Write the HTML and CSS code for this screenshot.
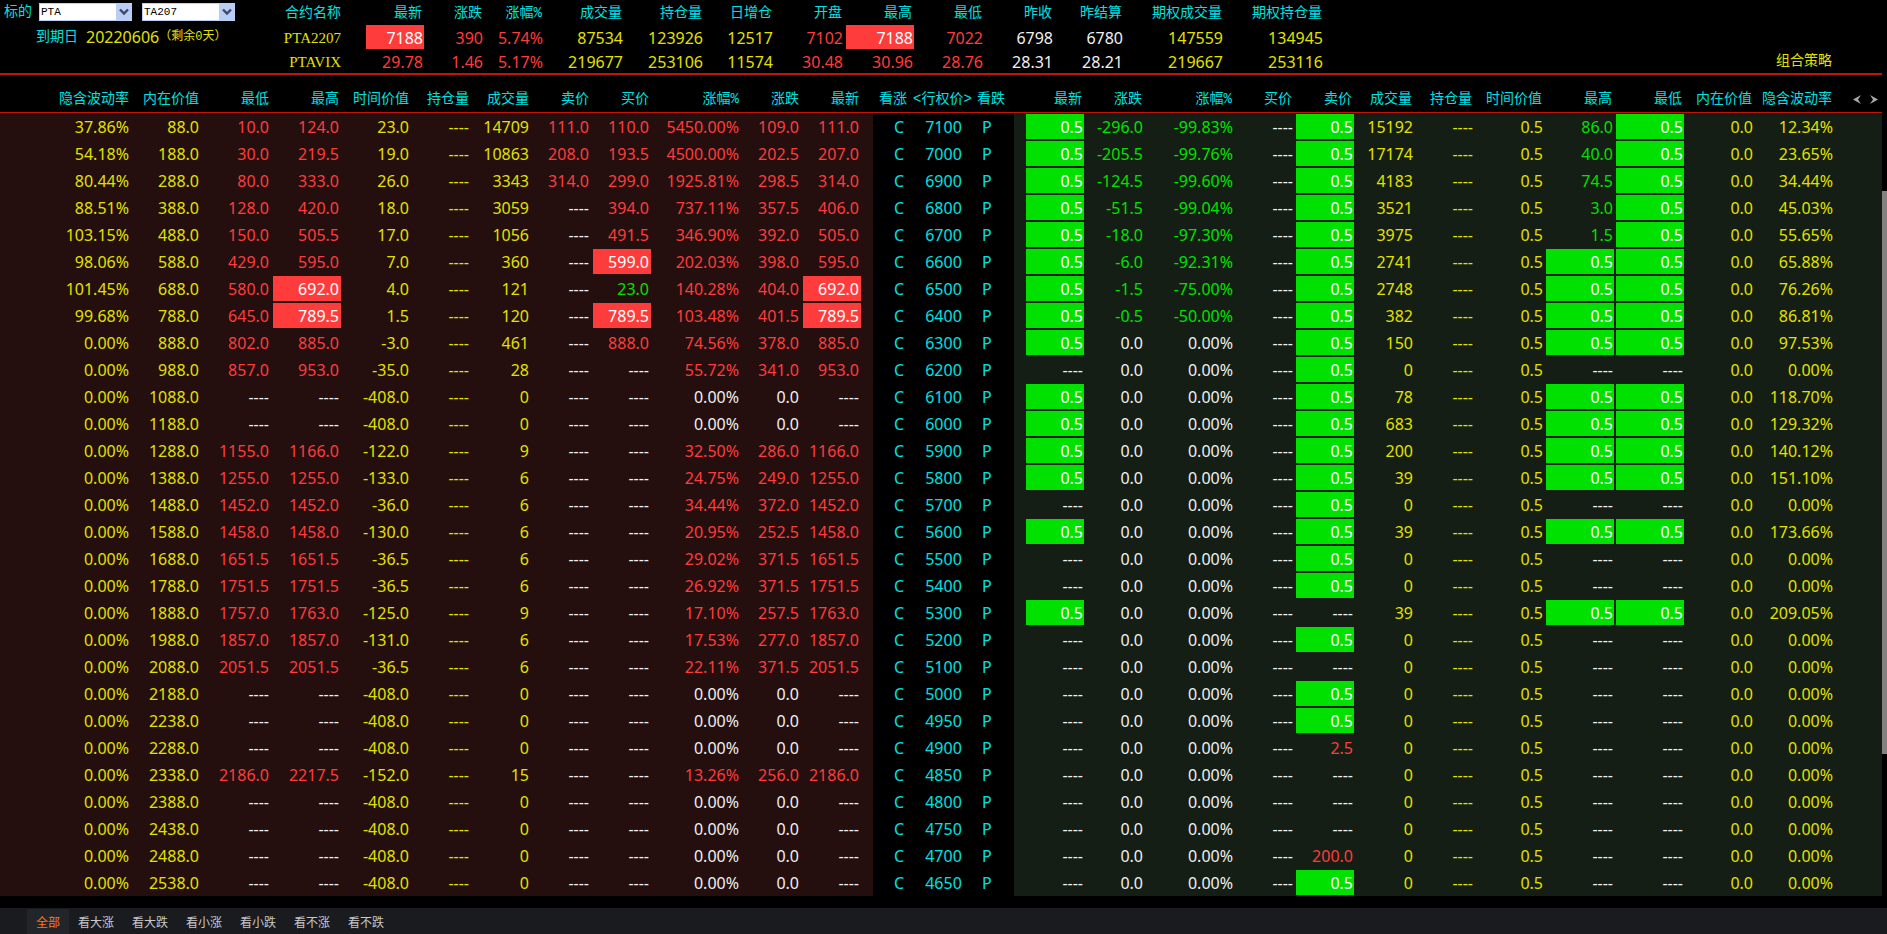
FILE: index.html
```html
<!DOCTYPE html>
<html lang="zh-CN">
<head>
<meta charset="utf-8">
<title>期权T型报价</title>
<link rel="stylesheet" href="styles.css">
</head>
<body>
<div class="board">
  <main class="board-main">
    <header class="top">
      <div class="picker">
        <div class="picker-row">
          <label for="underlying">标的</label>
          <span class="select-box">
            <select id="underlying"><option>PTA</option></select>
            <span class="select-arrow"><svg width="10" height="8" viewBox="0 0 10 8"><path d="M1 1.5 5 5.5 9 1.5" fill="none" stroke="#3c4a66" stroke-width="2.4"/></svg></span>
          </span>
          <span class="select-box">
            <select id="series" aria-label="合约月份"><option>TA207</option></select>
            <span class="select-arrow"><svg width="10" height="8" viewBox="0 0 10 8"><path d="M1 1.5 5 5.5 9 1.5" fill="none" stroke="#3c4a66" stroke-width="2.4"/></svg></span>
          </span>
        </div>
        <div class="expiry">
          <span class="expiry-label">到期日</span>
          <span class="expiry-date">20220606</span>
          <span class="expiry-left">（剩余0天）</span>
        </div>
      </div>
      <table class="summary">
        <colgroup>
          <col class="w100"><col class="w60"><col class="w60"><col class="w60"><col class="w80"><col class="w80"><col class="w70"><col class="w70"><col class="w70"><col class="w70"><col class="w70"><col class="w70"><col class="w100"><col class="w100">
        </colgroup>
        <thead>
          <tr><th class="name">合约名称</th><th>最新</th><th>涨跌</th><th>涨幅%</th><th>成交量</th><th>持仓量</th><th>日增仓</th><th>开盘</th><th>最高</th><th>最低</th><th>昨收</th><th>昨结算</th><th>期权成交量</th><th>期权持仓量</th></tr>
        </thead>
        <tbody>
          <tr><td class="name">PTA2207</td><td class="hit-up">7188</td><td class="up">390</td><td class="up">5.74%</td><td>87534</td><td>123926</td><td>12517</td><td class="up">7102</td><td class="hit-up">7188</td><td class="up">7022</td><td class="flat">6798</td><td class="flat">6780</td><td>147559</td><td>134945</td></tr>
          <tr><td class="name">PTAVIX</td><td class="up">29.78</td><td class="up">1.46</td><td class="up">5.17%</td><td>219677</td><td>253106</td><td>11574</td><td class="up">30.48</td><td class="up">30.96</td><td class="up">28.76</td><td class="flat">28.31</td><td class="flat">28.21</td><td>219667</td><td>253116</td></tr>
        </tbody>
      </table>
      <a class="strategy" href="#">组合策略</a>
    </header>

    <table class="chain">
      <colgroup>
        <col class="w131"><col class="w70"><col class="w70"><col class="w70"><col class="w70"><col class="w60"><col class="w60"><col class="w60"><col class="w60"><col class="w90"><col class="w60"><col class="w60"><col class="w12">
        <col class="w36"><col class="w67"><col class="w38">
        <col class="w70"><col class="w60"><col class="w90"><col class="w60"><col class="w60"><col class="w60"><col class="w60"><col class="w70"><col class="w70"><col class="w70"><col class="w70"><col class="w80"><col class="w48">
      </colgroup>
      <thead>
        <tr>
          <th>隐含波动率</th><th>内在价值</th><th>最低</th><th>最高</th><th>时间价值</th><th>持仓量</th><th>成交量</th><th>卖价</th><th>买价</th><th>涨幅%</th><th>涨跌</th><th>最新</th><th></th>
          <th class="mark-call">看涨</th><th class="strike">&lt;行权价&gt;</th><th class="mark-put">看跌</th>
          <th>最新</th><th>涨跌</th><th>涨幅%</th><th>买价</th><th>卖价</th><th>成交量</th><th>持仓量</th><th>时间价值</th><th>最高</th><th>最低</th><th>内在价值</th><th>隐含波动率</th>
          <th class="pager">
            <div class="pager-buttons">
              <button type="button" aria-label="向左"><svg width="8" height="9" viewBox="0 0 8 9"><path d="M8 0 5 4.5 8 9 0 4.5Z" fill="#aaa"/></svg></button>
              <button type="button" aria-label="向右"><svg width="8" height="9" viewBox="0 0 8 9"><path d="M0 0 3 4.5 0 9 8 4.5Z" fill="#aaa"/></svg></button>
            </div>
          </th>
        </tr>
      </thead>
      <tbody id="quotes"></tbody>
    </table>
  </main>
  <div class="rail"><span class="rail-before"></span><span class="rail-thumb"></span><span class="rail-after"></span></div>
</div>
<nav class="tabs">
  <button type="button" class="tab active">全部</button>
  <button type="button" class="tab">看大涨</button>
  <button type="button" class="tab">看大跌</button>
  <button type="button" class="tab">看小涨</button>
  <button type="button" class="tab">看小跌</button>
  <button type="button" class="tab">看不涨</button>
  <button type="button" class="tab">看不跌</button>
</nav>
<script src="app.js"></script>
</body>
</html>
```

FILE: styles.css
```css
* { box-sizing: border-box; }

:root {
  --yellow: #e1e100;
  --cyan: #00e1e1;
  --red: #ff3c3c;
  --green: #00e100;
  --line: #c3140a;
  --cjk: "Liberation Mono", "Noto Sans CJK SC", monospace;
  --digits: "Noto Sans", "Noto Sans CJK SC", sans-serif;
}

body {
  margin: 0;
  min-height: 100vh;
  display: flex;
  flex-direction: column;
  background: #000;
  color: var(--yellow);
  font-family: var(--digits);
  font-size: 16px;
}

.board { display: flex; }
.board-main { flex: 1; min-width: 0; }

.top {
  display: flex;
  border-bottom: 2px solid var(--line);
}

.picker { flex: none; width: 264px; padding-left: 4px; }

.picker-row {
  display: flex;
  align-items: center;
  gap: 10px;
  height: 24px;
  font: 14px/20px var(--cjk);
  color: var(--cyan);
}
.picker-row label { margin-right: -3px; }

.select-box { position: relative; display: block; width: 93px; height: 18px; }
.select-box select {
  appearance: none;
  display: block;
  width: 100%;
  height: 100%;
  margin: 0;
  padding: 0 18px 0 1px;
  border: 1px solid #b9cdf5;
  border-radius: 0;
  background: #fff;
  color: #000;
  font: 11px/16px "Liberation Mono", monospace;
}
.select-arrow {
  position: absolute;
  top: 0;
  right: 0;
  bottom: 0;
  display: flex;
  width: 16px;
  align-items: center;
  justify-content: center;
  background: #b9cdf5;
  pointer-events: none;
}

.expiry { display: flex; align-items: center; height: 26px; padding-left: 32px; }
.expiry-label { font: 14px/20px var(--cjk); color: var(--cyan); margin-right: 8px; }
.expiry-date { line-height: 24px; }
.expiry-left { font: 12px/20px var(--cjk); }

table { border-spacing: 0; table-layout: fixed; }
th, td {
  padding: 0 1px 0 0;
  text-align: right;
  white-space: nowrap;
  vertical-align: middle;
}
th {
  padding-right: 2px;
  font: 14px/20px var(--cjk);
  color: var(--cyan);
}

.summary { flex: none; width: 1060px; }
.summary th { height: 25px; }
.summary td { height: 24px; padding-top: 2px; line-height: 22px; border-left: 2px solid transparent; background-clip: padding-box; }
.summary .name { padding-right: 23px; }
.summary td.name { font: 15px/22px "Liberation Serif", serif; }

.strategy {
  align-self: flex-end;
  margin-left: auto;
  padding: 0 50px 1px 0;
  font: 14px/22px var(--cjk);
  color: var(--yellow);
  text-decoration: none;
}

.chain { width: 100%; }
.chain th { height: 38px; padding-top: 11px; border-bottom: 1px solid var(--line); }
.chain td {
  height: 27px;
  padding-top: 1px;
  padding-right: 2px;
  line-height: 24px;
  border: solid transparent;
  border-width: 1px 0 1px 2px;
  background-clip: padding-box;
}
.chain tbody {
  background: linear-gradient(to right, #240f0e 0 46.387%, #000 46.387% 53.879%, #141e14 53.879%);
}
.chain .strike { padding-right: 0; text-align: center; }
.chain td.mark-call { padding-right: 5px; }
.chain .mark-put { text-align: left; padding-left: 1px; }
.chain td.mark-put { padding-left: 4px; }
.chain .mark-put ~ td { padding-right: 1px; }
.chain td.put-first { border-left-width: 12px; }
.chain tbody .mark-call, .chain tbody .strike, .chain tbody .mark-put { color: var(--cyan); }

.up { color: var(--red); }
.down { color: var(--green); }
.flat { color: #f0f0f0; }
.hit-up { background-color: #ff3c3c; color: #fff; }
.hit-down { background-color: var(--green); color: #fff; }

.pager-buttons { display: flex; justify-content: flex-end; gap: 9px; padding-right: 2px; }
.pager-buttons button { display: flex; padding: 0; border: 0; background: none; }

.rail { flex: none; width: 5px; display: flex; flex-direction: column; }
.rail-before { flex: 191; }
.rail-thumb { flex: 563; background: #828282; }
.rail-after { flex: 142; }

.tabs { display: flex; height: 26px; margin-top: auto; padding: 1px 0 0 27px; background: #1a1b1f; }
.tab {
  padding: 0 9px;
  border: 0;
  background: none;
  color: #c8c8c8;
  font: 12px/24px "Noto Sans CJK SC", sans-serif;
}
.tab.active { background: #22262b; color: #ff7519; }

.w12 { width: 12px; }
.w36 { width: 36px; }
.w38 { width: 38px; }
.w48 { width: 48px; }
.w60 { width: 60px; }
.w67 { width: 67px; }
.w70 { width: 70px; }
.w80 { width: 80px; }
.w90 { width: 90px; }
.w100 { width: 100px; }
.w131 { width: 131px; }
```

FILE: app.js
```js
// Each line: call side | strike | put side. "-" is an empty quote, "*" marks a
// limit-price cell, "r"/"g" force the colour of a single price.
// Call: iv intrinsic low high time volume ask bid pct change last
// Put:  last change pct ask volume high low iv
const rows = `
37.86% 88.0 10.0 124.0 23.0 14709 111.0 110.0 5450.00% 109.0 111.0|7100|0.5* -296.0 -99.83% 0.5* 15192 86.0 0.5* 12.34%
54.18% 188.0 30.0 219.5 19.0 10863 208.0 193.5 4500.00% 202.5 207.0|7000|0.5* -205.5 -99.76% 0.5* 17174 40.0 0.5* 23.65%
80.44% 288.0 80.0 333.0 26.0 3343 314.0 299.0 1925.81% 298.5 314.0|6900|0.5* -124.5 -99.60% 0.5* 4183 74.5 0.5* 34.44%
88.51% 388.0 128.0 420.0 18.0 3059 - 394.0 737.11% 357.5 406.0|6800|0.5* -51.5 -99.04% 0.5* 3521 3.0 0.5* 45.03%
103.15% 488.0 150.0 505.5 17.0 1056 - 491.5 346.90% 392.0 505.0|6700|0.5* -18.0 -97.30% 0.5* 3975 1.5 0.5* 55.65%
98.06% 588.0 429.0 595.0 7.0 360 - 599.0* 202.03% 398.0 595.0|6600|0.5* -6.0 -92.31% 0.5* 2741 0.5* 0.5* 65.88%
101.45% 688.0 580.0 692.0* 4.0 121 - 23.0g 140.28% 404.0 692.0*|6500|0.5* -1.5 -75.00% 0.5* 2748 0.5* 0.5* 76.26%
99.68% 788.0 645.0 789.5* 1.5 120 - 789.5* 103.48% 401.5 789.5*|6400|0.5* -0.5 -50.00% 0.5* 382 0.5* 0.5* 86.81%
0.00% 888.0 802.0 885.0 -3.0 461 - 888.0 74.56% 378.0 885.0|6300|0.5* 0.0 0.00% 0.5* 150 0.5* 0.5* 97.53%
0.00% 988.0 857.0 953.0 -35.0 28 - - 55.72% 341.0 953.0|6200|- 0.0 0.00% 0.5* 0 - - 0.00%
0.00% 1088.0 - - -408.0 0 - - 0.00% 0.0 -|6100|0.5* 0.0 0.00% 0.5* 78 0.5* 0.5* 118.70%
0.00% 1188.0 - - -408.0 0 - - 0.00% 0.0 -|6000|0.5* 0.0 0.00% 0.5* 683 0.5* 0.5* 129.32%
0.00% 1288.0 1155.0 1166.0 -122.0 9 - - 32.50% 286.0 1166.0|5900|0.5* 0.0 0.00% 0.5* 200 0.5* 0.5* 140.12%
0.00% 1388.0 1255.0 1255.0 -133.0 6 - - 24.75% 249.0 1255.0|5800|0.5* 0.0 0.00% 0.5* 39 0.5* 0.5* 151.10%
0.00% 1488.0 1452.0 1452.0 -36.0 6 - - 34.44% 372.0 1452.0|5700|- 0.0 0.00% 0.5* 0 - - 0.00%
0.00% 1588.0 1458.0 1458.0 -130.0 6 - - 20.95% 252.5 1458.0|5600|0.5* 0.0 0.00% 0.5* 39 0.5* 0.5* 173.66%
0.00% 1688.0 1651.5 1651.5 -36.5 6 - - 29.02% 371.5 1651.5|5500|- 0.0 0.00% 0.5* 0 - - 0.00%
0.00% 1788.0 1751.5 1751.5 -36.5 6 - - 26.92% 371.5 1751.5|5400|- 0.0 0.00% 0.5* 0 - - 0.00%
0.00% 1888.0 1757.0 1763.0 -125.0 9 - - 17.10% 257.5 1763.0|5300|0.5* 0.0 0.00% - 39 0.5* 0.5* 209.05%
0.00% 1988.0 1857.0 1857.0 -131.0 6 - - 17.53% 277.0 1857.0|5200|- 0.0 0.00% 0.5* 0 - - 0.00%
0.00% 2088.0 2051.5 2051.5 -36.5 6 - - 22.11% 371.5 2051.5|5100|- 0.0 0.00% - 0 - - 0.00%
0.00% 2188.0 - - -408.0 0 - - 0.00% 0.0 -|5000|- 0.0 0.00% 0.5* 0 - - 0.00%
0.00% 2238.0 - - -408.0 0 - - 0.00% 0.0 -|4950|- 0.0 0.00% 0.5* 0 - - 0.00%
0.00% 2288.0 - - -408.0 0 - - 0.00% 0.0 -|4900|- 0.0 0.00% 2.5r 0 - - 0.00%
0.00% 2338.0 2186.0 2217.5 -152.0 15 - - 13.26% 256.0 2186.0|4850|- 0.0 0.00% - 0 - - 0.00%
0.00% 2388.0 - - -408.0 0 - - 0.00% 0.0 -|4800|- 0.0 0.00% - 0 - - 0.00%
0.00% 2438.0 - - -408.0 0 - - 0.00% 0.0 -|4750|- 0.0 0.00% - 0 - - 0.00%
0.00% 2488.0 - - -408.0 0 - - 0.00% 0.0 -|4700|- 0.0 0.00% 200.0r 0 - - 0.00%
0.00% 2538.0 - - -408.0 0 - - 0.00% 0.0 -|4650|- 0.0 0.00% 0.5* 0 - - 0.00%
`.trim().split("\n");

const cell = (text, cls = "") => `<td class="${cls}">${text}</td>`;

function price(value, side, extra = "") {
  const make = (text, cls) => cell(text, extra ? `${cls} ${extra}` : cls);
  if (value === "-") return make("----", "flat");
  const text = value.replace(/[*rg]$/, "");
  if (value.endsWith("*")) return make(text, "hit-" + side);
  if (value.endsWith("r")) return make(text, "up");
  if (value.endsWith("g")) return make(text, "down");
  return make(text, parseFloat(text) === 0 ? "flat" : side);
}

document.getElementById("quotes").innerHTML = rows.map((row) => {
  const [call, strike, put] = row.split("|");
  const c = call.split(" ");
  const p = put.split(" ");
  const up = (v) => price(v, "up");
  const down = (v) => price(v, "down");
  return "<tr>" +
    cell(c[0]) + cell(c[1]) + up(c[2]) + up(c[3]) + cell(c[4]) + cell("----") + cell(c[5]) +
    up(c[6]) + up(c[7]) + up(c[8]) + up(c[9]) + up(c[10]) + cell("") +
    cell("C", "mark-call") + cell(strike, "strike") + cell("P", "mark-put") +
    price(p[0], "down", "put-first") + down(p[1]) + down(p[2]) + down("-") + down(p[3]) +
    cell(p[4]) + cell("----") + cell("0.5") + down(p[5]) + down(p[6]) + cell("0.0") + cell(p[7]) + cell("") +
    "</tr>";
}).join("");
```
